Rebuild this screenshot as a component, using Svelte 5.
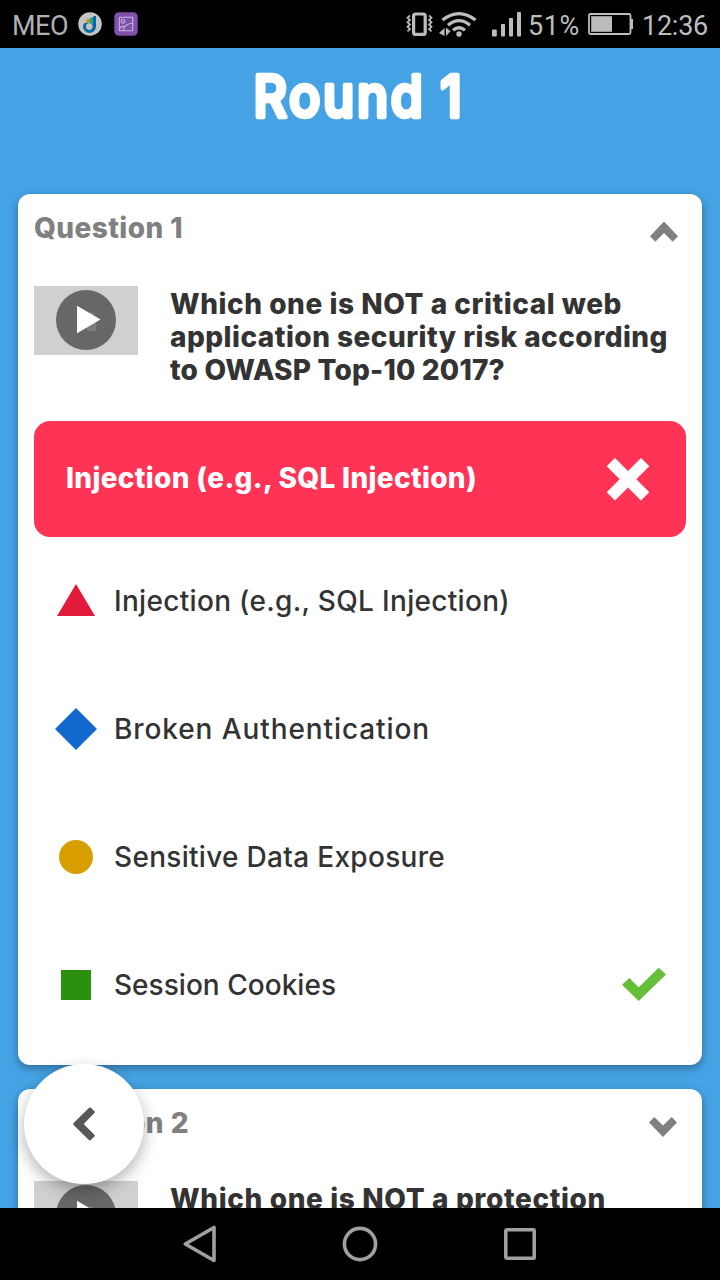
<script>
  const options = [
    { shape: 'triangle', label: 'Injection (e.g., SQL Injection)', width: 396, correct: false },
    { shape: 'diamond', label: 'Broken Authentication', width: 316, correct: false },
    { shape: 'circle', label: 'Sensitive Data Exposure', width: 331, correct: false },
    { shape: 'square', label: 'Session Cookies', width: 222, correct: true }
  ];
  const firstLines = [
    { text: 'Which one is NOT a critical web', width: 452 },
    { text: 'application security risk according', width: 498 },
    { text: 'to OWASP Top-10 2017?', width: 335 }
  ];
  const secondLines = [{ text: 'Which one is NOT a protection', width: 436 }];

  // Spreads the letters of one line so that it fills the given width.
  function fit(node, width) {
    const gap = (width - node.getBoundingClientRect().width) / node.textContent.length;
    node.style.letterSpacing = `${gap}px`;
  }
</script>

{#snippet thumb()}
  <svg class="thumb" width="104" height="69" viewBox="0 0 104 69">
    <rect width="104" height="69" fill="#d0d0d0" />
    <circle cx="52" cy="34" r="30" fill="#676767" />
    <path d="M53 30L57 25L62 30V45H53Z" fill="#7d7d7d" />
    <path d="M43 19.7V47.3L66.5 33.5Z" fill="#fff" />
  </svg>
{/snippet}

{#snippet lines(items)}
  <div class="question">
    {#each items as line}
      <div><span use:fit={line.width}>{line.text}</span></div>
    {/each}
  </div>
{/snippet}

<div class="screen">
  <header class="status">
    <span class="carrier"><span use:fit={56}>MEO</span></span>
    <svg class="app-icon" width="24" height="24" viewBox="0 0 24 24">
      <circle cx="12" cy="12" r="11.8" fill="#c4c4c4" />
      <path d="M8 8.5q0-1.5 1.5-1.5H12v7H8z" fill="#bd9a2c" />
      <path d="M11.7 7q0-1.5 1.5-1.5h2.5V14h-4z" fill="#1ba883" />
      <path d="M15 5.5Q15 4 16.5 4H18v10.5A6.5 6.5 0 1 1 5 14.5Q5 12 6.5 11h3l4 1H15z" fill="#0967a7" />
      <circle cx="11.3" cy="14.6" r="3.3" fill="#c4c4c4" />
    </svg>
    <svg class="gallery" width="24" height="24" viewBox="0 0 24 24">
      <rect x=".3" y=".3" width="23.4" height="23.4" rx="4.5" fill="#8150ad" />
      <g fill="none" stroke="#c9b5dc" stroke-width="1.1">
        <rect x="5.3" y="5.3" width="13.4" height="13.4" rx=".7" />
        <circle cx="9" cy="9.3" r="1.8" />
        <path d="M9.2 18.5C9.8 14.5 13 11.5 18.5 11.2M5.5 16.5q2-2.5 5-2" />
      </g>
    </svg>
    <svg class="signals" width="122" height="48" viewBox="0 0 122 48">
      <g fill="none" stroke="#bdbdbd">
        <rect x="8.6" y="14" width="11.6" height="20.4" rx="2" stroke-width="3.2" />
        <path d="M5 15.5l-2.5 2.2L5 20l-2.5 2.3L5 24.5l-2.5 2.3L5 29l-2.5 2.3M24 15.5l2.5 2.2L24 20l2.5 2.3-2.5 2.2 2.5 2.3L24 29l2.5 2.3" stroke-width="1.7" />
        <path d="M37.5 20Q54 7.2 70.5 20M43 25.3Q54 16 65 25.3M48 30.3Q54 25.3 60 30.3" stroke-width="3.3" />
      </g>
      <g fill="#bdbdbd">
        <circle cx="54" cy="34" r="2.7" />
        <path d="M34 33l5.5-5v8zM41 27.5v8.5l4.5-4.7z" />
        <rect x="87" y="29.5" width="4.8" height="7" rx="1" />
        <rect x="96" y="24" width="4" height="12.5" rx="1" />
        <rect x="104" y="18" width="4" height="18.5" rx="1" />
        <rect x="112" y="12" width="4" height="24.5" rx="1" />
      </g>
    </svg>
    <span class="percent"><span use:fit={52}>51%</span></span>
    <svg class="battery" width="46" height="24" viewBox="0 0 46 24">
      <rect x="1" y="2" width="41.5" height="20" rx="1.5" fill="none" stroke="#bdbdbd" stroke-width="1.8" />
      <rect x="3.2" y="4.2" width="20.8" height="15.6" fill="#bdbdbd" />
      <rect x="42.5" y="7" width="2.5" height="10" fill="#bdbdbd" />
    </svg>
    <span class="clock"><span use:fit={66}>12:36</span></span>
  </header>

  <main class="page">
    <h1>
      <svg width="720" height="146" viewBox="0 0 720 146">
        <text x="253.5" y="68.7" textLength="211" lengthAdjust="spacingAndGlyphs">Round 1</text>
      </svg>
    </h1>

    <section class="card">
      <div class="head">
        <span use:fit={149}>Question 1</span>
        <svg width="30" height="22" viewBox="0 0 30 22"><path d="M15 .5L29 15.2L23.7 20.7L15 12L6.3 20.7L1 15.2Z" fill="#808080" /></svg>
      </div>
      <div class="prompt">
        {@render thumb()}
        {@render lines(firstLines)}
      </div>
      <div class="answer">
        <span use:fit={411}>Injection (e.g., SQL Injection)</span>
        <svg width="44" height="44" viewBox="0 0 44 44">
          <path d="M9 1L22 14L35 1L43.3 9.3L30.3 22.3L43.3 35.3L35 43.6L22 30.6L9 43.6L.7 35.3L13.7 22.3L.7 9.3Z" fill="#fff" />
        </svg>
      </div>
      {#each options as option}
        <div class="option">
          <svg class="shape" width="44" height="44" viewBox="0 0 44 44">
            {#if option.shape === 'triangle'}
              <path d="M22 5L41 37H3Z" fill="#e21b3c" />
            {:else if option.shape === 'diamond'}
              <path d="M22 1L43 22L22 43L1 22Z" fill="#1368ce" />
            {:else if option.shape === 'circle'}
              <circle cx="22" cy="22" r="17" fill="#d89e00" />
            {:else}
              <rect x="7" y="7" width="30" height="30" fill="#298f0d" />
            {/if}
          </svg>
          <span use:fit={option.width}>{option.label}</span>
          {#if option.correct}
            <svg class="tick" width="44" height="34" viewBox="0 0 44 34">
              <path d="M0 17.7L7.3 11L16.7 20.2L36.7 .7L44 7.5L16.7 34Z" fill="#66bf39" />
            </svg>
          {/if}
        </div>
      {/each}
    </section>

    <section class="card">
      <div class="head second">
        <span use:fit={155}>Question 2</span>
        <svg width="30" height="22" viewBox="0 0 30 22"><path d="M15 21L29 6.5L23.7 1L15 9.5L6.3 1L1 6.5Z" fill="#808080" /></svg>
      </div>
      <div class="prompt">
        {@render thumb()}
        {@render lines(secondLines)}
      </div>
    </section>

    <button class="back" aria-label="Back">
      <svg width="24" height="36" viewBox="0 0 24 36">
        <path d="M2.5 18L18 2.6L21.5 6.1L9.8 18L21.5 29.7L18 33.2Z" fill="#585858" stroke="#585858" stroke-width="2.6" stroke-linejoin="round" />
      </svg>
    </button>
  </main>

  <nav class="navbar">
    <svg width="40" height="40" viewBox="0 0 40 40"><path d="M5.3 20L34 3.5V36.5Z" /></svg>
    <svg width="40" height="40" viewBox="0 0 40 40"><circle cx="20" cy="20" r="15.6" /></svg>
    <svg width="40" height="40" viewBox="0 0 40 40"><rect x="5.8" y="5.8" width="28.4" height="28.4" rx="1" /></svg>
  </nav>
</div>

<style>
  :global(body) { margin: 0; background: #000; }
  .screen {
    width: 720px;
    height: 1280px;
    display: flex;
    flex-direction: column;
    overflow: hidden;
    background: #45a3e5;
    font: 500 28px/33px Inter, sans-serif;
    color: #333;
  }
  svg { display: block; flex: none; }
  span { white-space: nowrap; }
  .status {
    flex: none;
    height: 48px;
    box-sizing: border-box;
    padding: 0 12px;
    display: flex;
    align-items: center;
    background: #000;
    color: #bdbdbd;
    font: 400 27px/48px Roboto, sans-serif;
  }
  .carrier { width: 66px; padding-top: 3px; color: #b0b0b0; }
  .gallery { margin-left: 12px; }
  .signals { margin-left: 267px; }
  .percent { width: 52px; margin-left: 1px; padding-top: 3px; }
  .battery { margin-left: 8px; }
  .clock { margin-left: 8px; padding-top: 3px; }
  .page {
    position: relative;
    flex: none;
    height: 1160px;
    overflow: hidden;
  }
  h1 { margin: 0; height: 146px; }
  h1 text {
    font: 500 58px Inter, sans-serif;
    letter-spacing: 3px;
    word-spacing: -2px;
    fill: #fff;
    stroke: #fff;
    stroke-width: 4.6px;
    stroke-linejoin: round;
  }
  .card {
    margin: 0 18px 24px;
    padding: 0 16px 16px;
    border-radius: 12px;
    background: #fff;
    box-shadow: 0 3px 8px rgba(0, 0, 0, .35);
  }
  .head {
    height: 92px;
    box-sizing: border-box;
    padding: 18px 7px 0 0;
    display: flex;
    justify-content: space-between;
    align-items: flex-start;
    font-weight: 800;
    color: #808080;
  }
  .head svg { margin-top: 9px; }
  .second { padding-right: 8px; }
  .prompt {
    height: 135px;
    display: flex;
    gap: 32px;
    font-weight: 800;
  }
  .question { padding-top: 2px; }
  .answer {
    height: 116px;
    box-sizing: border-box;
    padding: 0 36px 0 32px;
    display: flex;
    align-items: center;
    justify-content: space-between;
    border-radius: 16px;
    background: #ff3355;
    color: #fff;
    font-weight: 800;
  }
  .answer span { padding-bottom: 2px; }
  .option {
    height: 128px;
    padding: 0 20px;
    display: flex;
    align-items: center;
  }
  .shape { margin-right: 16px; }
  .tick { margin: 0 0 2px auto; }
  .back {
    position: absolute;
    left: 24px;
    top: 1016px;
    width: 120px;
    height: 120px;
    padding: 0;
    border: 0;
    border-radius: 50%;
    display: flex;
    align-items: center;
    justify-content: center;
    background: #fff;
    box-shadow: 0 6px 16px rgba(0, 0, 0, .3);
  }
  .navbar {
    flex: none;
    height: 72px;
    display: flex;
    justify-content: center;
    align-items: center;
    gap: 120px;
    background: #000;
  }
  .navbar svg { fill: none; stroke: #a0a0a0; stroke-width: 3.6; stroke-linejoin: round; }
</style>
